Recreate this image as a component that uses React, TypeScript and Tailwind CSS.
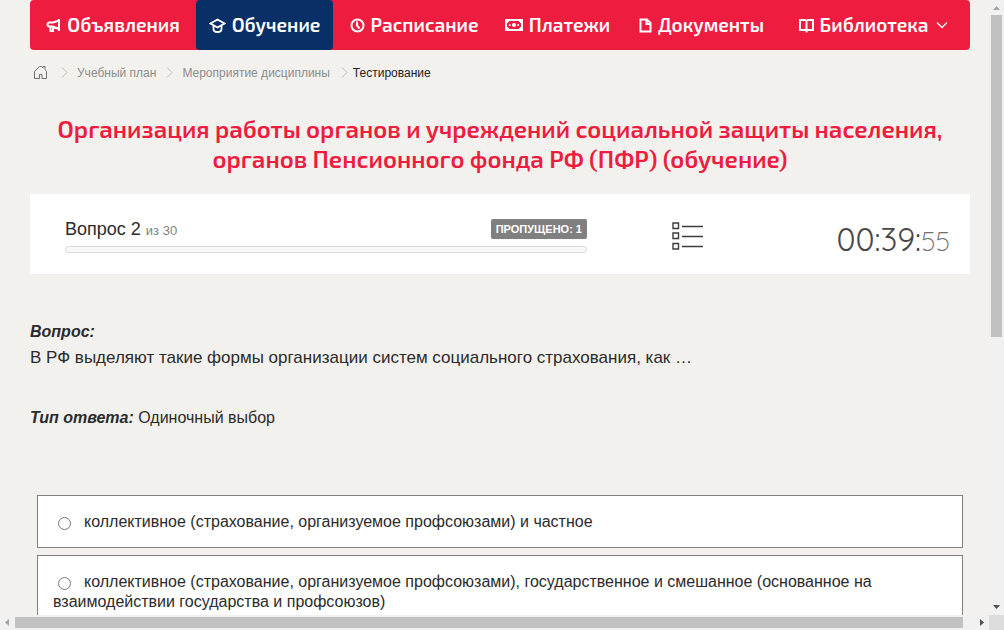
import type { ReactNode } from 'react';

// Верхнее меню: иконка, подпись, признаки активного пункта и подменю
type NavItem = { title: string, icon: ReactNode, active?: boolean, more?: boolean };

const navItems: NavItem[] = [
    {
        title: 'Объявления',
        icon: (
            <svg viewBox="0 0 15 15" className="h-[15px] w-[15px] shrink-0" fill="none" stroke="currentColor" strokeWidth="2">
                <path d="M13 1v12M13 2.500L7 4.500H3.500a2 2 0 0 0 0 4H7L13 11M4.500 8.500V13H7V9" />
            </svg>
        ),
    },
    {
        title: 'Обучение',
        active: true,
        icon: (
            <svg viewBox="0 0 17 15" className="h-[15px] w-[17px] shrink-0" fill="none" stroke="currentColor" strokeWidth="1.800">
                <path d="M1.500 5.500L8.500 1.500l7 4L8.500 9.500zM4.500 8v3c0 1.500 1.500 3 4 3s4-1.500 4-3V8" />
            </svg>
        ),
    },
    {
        title: 'Расписание',
        icon: (
            <svg viewBox="0 0 15 15" className="h-[15px] w-[15px] shrink-0" fill="none" stroke="currentColor" strokeWidth="2">
                <circle cx="7.500" cy="7.500" r="6" />
                <path d="M7 3.500V7.500l2.500 3" />
            </svg>
        ),
    },
    {
        title: 'Платежи',
        icon: (
            <svg viewBox="0 0 18 12" className="h-[12px] w-[18px] shrink-0" fill="none" stroke="currentColor" strokeWidth="2">
                <path d="M1 1h16v10H1z" />
                <path d="M2 2h2v1H3v1H2zM16 2h-2v1h1v1h1zM2 10h2V9H3V8H2zM16 10h-2V9h1V8h1z" fill="currentColor" stroke="none" />
                <circle cx="9" cy="6" r="2" fill="currentColor" stroke="none" />
                <path d="M4 6h1.500M12.500 6H14" />
            </svg>
        ),
    },
    {
        title: 'Документы',
        icon: (
            <svg viewBox="0 0 13 15" className="h-[15px] w-[13px] shrink-0" fill="none" stroke="currentColor" strokeWidth="2">
                <path d="M1.500 1.500H8L11.500 5v8.500h-10zM7.500 1.500V6h4" />
            </svg>
        ),
    },
    {
        title: 'Библиотека',
        more: true,
        icon: (
            <svg viewBox="0 0 15 15" className="h-[15px] w-[15px] shrink-0" fill="none" stroke="currentColor" strokeWidth="2">
                <path d="M7.500 2.500v12M1 2h5l1.500 1L9 2h5v10H9l-1.500 1L6 12H1z" />
            </svg>
        ),
    },
];

const options = [
    'коллективное (страхование, организуемое профсоюзами) и частное',
    'коллективное (страхование, организуемое профсоюзами), государственное и смешанное (основанное на взаимодействии государства и профсоюзов)',
];

const Nav = () => (
    <nav className="grid h-[50px] grid-cols-[166fr_137fr_162fr_125fr_163fr_181fr] rounded bg-[#ee1c3e] pr-1.5 font-['Exo_2','Open_Sans',sans-serif] text-[19px] font-semibold text-white">
        {navItems.map((item) => (
            <a
                key={item.title}
                href="#"
                className={item.active
                    ? 'flex items-center justify-center gap-1.5 whitespace-nowrap rounded bg-[#082f66]'
                    : 'flex items-center justify-center gap-1.5 whitespace-nowrap'}
            >
                {item.icon}
                {item.title}
                {item.more && (
                    <svg viewBox="0 0 12 8" className="ml-0.5 h-2 w-3 shrink-0" fill="none" stroke="currentColor" strokeWidth="1.300">
                        <path d="M1 1.500l5 5 5-5" />
                    </svg>
                )}
            </a>
        ))}
    </nav>
);

const Chevron = () => (
    <svg viewBox="0 0 7 11" className="h-[11px] w-[7px]" fill="none" stroke="#b8b8b8">
        <path d="M1 .5l5 5-5 5" />
    </svg>
);

const Breadcrumbs = () => (
    <div className="flex h-[45px] items-center pl-1 text-xs text-[#8c8c8c]">
        <a href="#" aria-label="Главная">
            <svg viewBox="0 0 13 13" className="h-[13px] w-[13px]" fill="none" stroke="#707070">
                <path d="M.5 12.500V5.500L5.500 .5h2l1.500 1.500V.5h2v3l1.500 2v7H8V8.500H5.500v4z" />
            </svg>
        </a>
        <div className="ml-3.5 flex items-center gap-[9px]"><Chevron /><a href="#">Учебный план</a></div>
        <div className="ml-2.5 flex items-center gap-[9px]"><Chevron /><a href="#">Мероприятие дисциплины</a></div>
        <div className="ml-[11px] flex items-center gap-[5px] text-[#222]"><Chevron />Тестирование</div>
    </div>
);

const Status = () => (
    <section className="grid h-20 grid-cols-[522fr_201fr_162fr] bg-white pl-[35px] pr-5">
        <div className="pt-[25px]">
            <div className="flex h-5 items-center justify-between">
                <div className="pt-0.5 text-lg leading-5 text-[#2b2b2b]">
                    Вопрос 2 <span className="text-[13px] text-[#808080]">из 30</span>
                </div>
                <span className="h-5 rounded-xs bg-[#808080] px-[5px] text-[11px] font-bold leading-5 text-white">ПРОПУЩЕНО: 1</span>
            </div>
            <div role="progressbar" aria-label="Прогресс" aria-valuenow={0} className="mt-[7px] h-[7px] rounded-full border border-[#d9d9d9] bg-[#f8f8f8]"></div>
        </div>
        <button aria-label="Список вопросов" className="flex items-center justify-center pt-1">
            <svg viewBox="0 0 31 28" className="h-7 w-[31px]" fill="none" stroke="#3c3c3c" strokeWidth="1.400">
                <path d="M1 1h5.500v5.500H1zM1 11h5.500v5.500H1zM1 21.500h5.500V27H1zM10 4.500h21M10 14.500h21M10 24.500h21" />
            </svg>
        </button>
        <div className="flex items-baseline justify-end pt-[22px] font-['Quicksand','Lato',sans-serif] text-[32px] font-normal leading-[46px] text-[#484848]">
            00:39:<span className="text-[27px] font-light text-[#707070]">55</span>
        </div>
    </section>
);

const Scrollbars = () => (
    <>
        {/* вертикальная полоса */}
        <div className="col-start-2 row-start-1 flex flex-col items-center justify-between bg-[#f1f1f1]">
            <svg viewBox="0 0 15 15" className="h-[15px] w-[15px]" fill="#a3a3a3"><path d="M4 10h7L7.500 6z" /></svg>
            <div className="mb-auto h-11/21 w-[11px] bg-[#c1c1c1]"></div>
            <svg viewBox="0 0 15 15" className="h-[15px] w-[15px]" fill="#505050"><path d="M4 5h7L7.500 9z" /></svg>
        </div>
        {/* горизонтальная полоса */}
        <div className="col-start-1 row-start-2 flex items-center bg-[#f1f1f1]">
            <svg viewBox="0 0 15 15" className="h-[15px] w-[15px] shrink-0" fill="#a3a3a3"><path d="M9 4v7L5 7.500z" /></svg>
            <div className="mr-[11px] h-[11px] grow bg-[#c1c1c1]"></div>
            <svg viewBox="0 0 15 15" className="h-[15px] w-[15px] shrink-0" fill="#505050"><path d="M6 4v7l4-3.500z" /></svg>
        </div>
        <div className="bg-[#dcdcdc]"></div>
    </>
);

const App = () => {
    return (
        <div className="grid h-screen grid-cols-[minmax(0,1fr)_15px] grid-rows-[minmax(0,1fr)_15px] bg-[#f3f1ed] font-['Liberation_Sans',Arial,sans-serif] text-base text-[#2b2b2b]">
            <main className="overflow-hidden pl-[30px] pr-[19px]">
                <Nav />
                <Breadcrumbs />

                <h1 className="mb-5 mt-[19px] text-center font-['Exo_2','Open_Sans',sans-serif] text-2xl font-semibold leading-[30px] text-[#ee1c3e]">
                    Организация работы органов и учреждений социальной защиты населения,
                    <br />
                    органов Пенсионного фонда РФ (ПФР) (обучение)
                </h1>

                <Status />

                {/* вопрос */}
                <div className="mt-12 leading-5">
                    <p className="font-bold italic">Вопрос:</p>
                    <p className="mt-1.5 text-[17px]">В РФ выделяют такие формы организации систем социального страхования, как …</p>
                    <p className="mt-10"><b className="italic">Тип ответа:</b> Одиночный выбор</p>
                </div>

                {/* варианты ответа */}
                <form className="mx-[7px] mt-[67px] space-y-[7px] leading-5">
                    {options.map((text) => (
                        <label key={text} className="block border border-[#808080] bg-white px-[15px] pb-[15px] pt-4">
                            <input type="radio" name="answer" className="ml-[5px] mr-[13px] h-[13px] w-[13px] align-[-3px]" />
                            {text}
                        </label>
                    ))}
                </form>
            </main>
            <Scrollbars />
        </div>
    );
}

export default App;
